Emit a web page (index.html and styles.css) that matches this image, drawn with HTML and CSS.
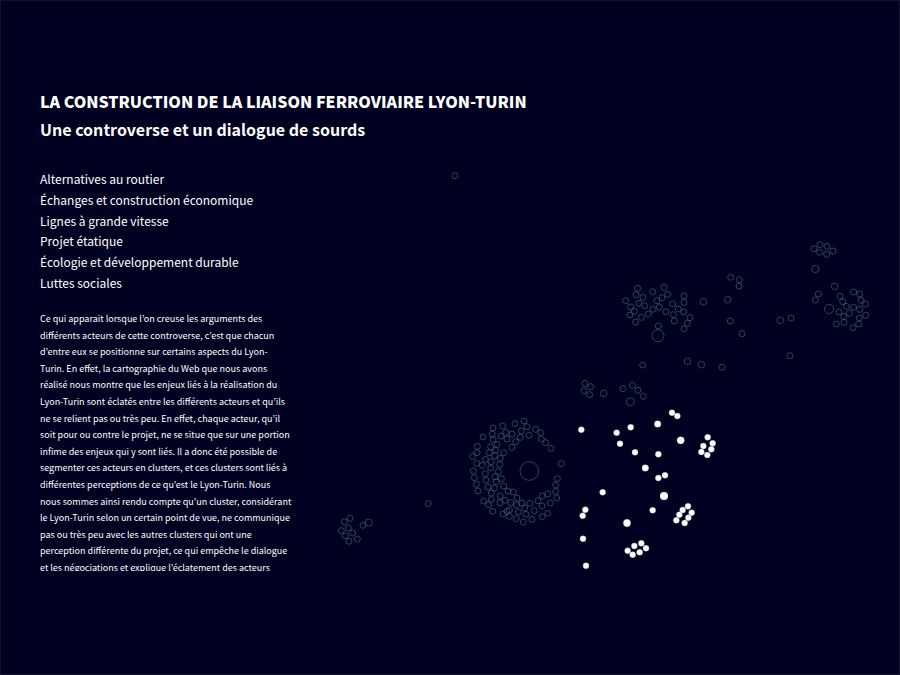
FILE: index.html
```html
<!DOCTYPE html>
<html lang="fr">
<head>
<meta charset="utf-8">
<meta name="viewport" content="width=device-width, initial-scale=1">
<title>La construction de la liaison ferroviaire Lyon-Turin</title>
<link rel="stylesheet" href="styles.css">
</head>
<body>
<svg class="map" viewBox="0 0 900 675" aria-hidden="true"></svg>
<main class="content">
  <header>
    <h1 class="title">LA CONSTRUCTION DE LA LIAISON FERROVIAIRE LYON-TURIN</h1>
    <h2 class="subtitle">Une controverse et un dialogue de sourds</h2>
  </header>
  <nav>
    <ul class="themes">
      <li><a href="#routier">Alternatives au routier</a></li>
      <li><a href="#echanges">Échanges et construction économique</a></li>
      <li><a href="#lignes">Lignes à grande vitesse</a></li>
      <li><a href="#projet">Projet étatique</a></li>
      <li><a href="#ecologie">Écologie et développement durable</a></li>
      <li><a href="#luttes">Luttes sociales</a></li>
    </ul>
  </nav>
  <div class="intro">
    <p class="lines">
      <span>Ce qui apparait lorsque l’on creuse les arguments des</span>
      <span>différents acteurs de cette controverse, c’est que chacun</span>
      <span>d’entre eux se positionne sur certains aspects du Lyon-</span>
      <span>Turin. En effet, la cartographie du Web que nous avons</span>
      <span>réalisé nous montre que les enjeux liés à la réalisation du</span>
      <span>Lyon-Turin sont éclatés entre les différents acteurs et qu’ils</span>
      <span>ne se relient pas ou très peu. En effet, chaque acteur, qu’il</span>
      <span>soit pour ou contre le projet, ne se situe que sur une portion</span>
      <span>infime des enjeux qui y sont liés. Il a donc été possible de</span>
      <span>segmenter ces acteurs en clusters, et ces clusters sont liés à</span>
      <span>différentes perceptions de ce qu’est le Lyon-Turin. Nous</span>
      <span>nous sommes ainsi rendu compte qu’un cluster, considérant</span>
      <span>le Lyon-Turin selon un certain point de vue, ne communique</span>
      <span>pas ou très peu avec les autres clusters qui ont une</span>
      <span>perception différente du projet, ce qui empêche le dialogue</span>
      <span>et les négociations et explique l’éclatement des acteurs</span>
    </p>
  </div>
</main>
<script src="map.js"></script>
</body>
</html>
```
FILE: styles.css
```css
body {
  margin: 0;
  min-height: 100vh;
  box-sizing: border-box;
  border: 1px solid #10142f;
  background: #000020;
  color: #fff;
  font-family: "Noto Sans CJK JP", "Open Sans", sans-serif;
}

.map {
  position: absolute;
  top: 0;
  left: 0;
  width: 100%;
  z-index: -1;
}

.node {
  fill: none;
  stroke: #446478;
  stroke-width: 2;
}

.node-active {
  fill: #fff;
  stroke: #a0b4c4;
  stroke-width: 1;
}

.content {
  padding: 86px 39px 0;
}

.title {
  margin: 0;
  font-size: 16px;
  font-weight: 900;
  line-height: 28px;
}

.subtitle {
  margin: 0;
  font-size: 16px;
  font-weight: 700;
  line-height: 28px;
}

.themes {
  display: flex;
  flex-direction: column;
  justify-content: space-between;
  height: 124px;
  margin: 26px 0 0;
  padding: 0;
  list-style: none;
  font-size: 12px;
  line-height: 20px;
}

.themes a {
  color: inherit;
  text-decoration: none;
}

.intro {
  max-height: 260px;
  margin-top: 18px;
  overflow: hidden;
}

.lines {
  display: flex;
  flex-direction: column;
  justify-content: space-between;
  height: 265px;
  margin: 0;
  font-size: 9px;
  line-height: 16px;
  white-space: nowrap;
}
```
FILE: map.js
```js
// Each cluster has an origin in map units; its nodes are [x, y, radius] in thirds of a unit.
const clusters = [
  { at: [300, 80], nodes: [[465, 287]] },
  { at: [460, 410], nodes: [
    [208, 183, 28], [192, 33], [165, 41], [128, 48], [99, 54], [97, 72], [69, 81], [201, 50], [184, 63],
    [227, 58], [242, 68], [244, 87], [257, 98], [273, 115], [207, 76], [181, 82], [156, 72], [137, 67],
    [123, 78], [141, 87], [167, 95], [156, 112], [99, 89], [111, 103], [92, 111], [107, 121], [88, 128],
    [104, 137], [131, 128], [121, 145], [52, 109], [51, 128], [38, 139], [50, 160], [76, 148], [67, 166],
    [93, 155], [92, 174], [119, 164], [40, 183], [43, 203], [49, 223], [54, 243], [76, 191], [78, 210],
    [84, 231], [105, 200], [115, 185], [109, 216], [124, 206], [103, 234], [131, 228], [94, 249],
    [144, 243], [160, 246], [121, 258], [94, 268], [71, 273], [86, 284], [98, 304], [120, 278], [135, 271],
    [152, 278], [171, 264], [129, 312], [148, 300], [148, 319], [141, 304], [169, 285], [186, 279],
    [194, 294], [210, 280], [175, 306], [169, 326], [190, 336], [198, 313], [216, 328], [223, 302],
    [234, 272], [247, 258], [263, 252], [246, 288], [271, 279], [263, 310], [247, 320], [290, 264],
    [287, 244], [287, 225], [292, 206], [304, 161]
  ] },
  { at: [610, 270], nodes: [
    [144, 197, 18], [145, 168], [83, 55], [78, 74], [47, 92], [99, 82], [86, 100], [104, 107], [62, 111],
    [73, 124], [60, 135], [77, 156], [94, 142], [115, 132], [129, 118], [148, 111], [141, 92], [156, 83],
    [173, 73], [162, 52], [128, 65], [188, 102], [168, 125], [190, 134], [193, 153], [205, 117],
    [221, 126], [222, 97], [222, 78], [240, 143], [232, 160], [222, 176], [280, 95, 10], [353, 89, 10],
    [362, 22], [388, 29], [387, 48], [361, 153], [396, 191], [98, 285], [233, 274, 10], [274, 284, 10],
    [336, 292]
  ] },
  { at: [740, 230], nodes: [
    [222, 56], [240, 44], [261, 49], [239, 67], [260, 73], [279, 63], [226, 117, 11], [235, 192],
    [226, 210], [267, 237, 14], [284, 169, 10], [300, 199], [308, 215], [319, 229], [341, 186], [359, 192],
    [363, 211], [376, 222], [341, 232], [359, 238], [377, 256], [297, 246], [328, 250], [311, 259],
    [312, 277], [289, 282], [358, 264], [356, 282], [339, 293], [121, 271, 10], [153, 264], [150, 377]
  ] },
  { at: [570, 370], nodes: [
    [45, 40], [62, 50], [42, 62], [59, 74], [101, 70, 10], [159, 56], [187, 46], [204, 61], [220, 79],
    [181, 95, 12]
  ] },
  { at: [320, 490], nodes: [
    [90, 85], [73, 95], [85, 114], [64, 122], [98, 129], [76, 137], [87, 154], [112, 147], [129, 106],
    [146, 98, 11], [325, 41]
  ] },
  { at: [570, 370], active: true, nodes: [
    [34, 179], [140, 188], [182, 172], [150, 221], [195, 247], [263, 162, 10], [306, 128], [322, 138],
    [332, 211, 11], [265, 253], [226, 294, 10], [265, 324], [285, 316], [413, 202], [428, 220], [400, 228],
    [424, 238], [394, 246], [412, 255]
  ] },
  { at: [570, 470], active: true, nodes: [
    [98, 67], [46, 119], [38, 137], [39, 206], [48, 287], [171, 159, 11], [282, 78, 12], [248, 121],
    [354, 109], [338, 120], [328, 134], [319, 151], [365, 128], [355, 143], [344, 159], [214, 220],
    [193, 228], [173, 242], [188, 254], [209, 247], [228, 235]
  ] }
];

const SVG = "http://www.w3.org/2000/svg";
const map = document.querySelector(".map");

for (const { at, active, nodes } of clusters) {
  const group = document.createElementNS(SVG, "g");
  group.setAttribute("class", active ? "node-active" : "node");
  group.setAttribute("transform", `translate(${at[0]} ${at[1]}) scale(${1 / 3})`);
  for (const [x, y, r = 9] of nodes) {
    const circle = document.createElementNS(SVG, "circle");
    circle.setAttribute("cx", x);
    circle.setAttribute("cy", y);
    circle.setAttribute("r", r);
    group.append(circle);
  }
  map.append(group);
}
```
